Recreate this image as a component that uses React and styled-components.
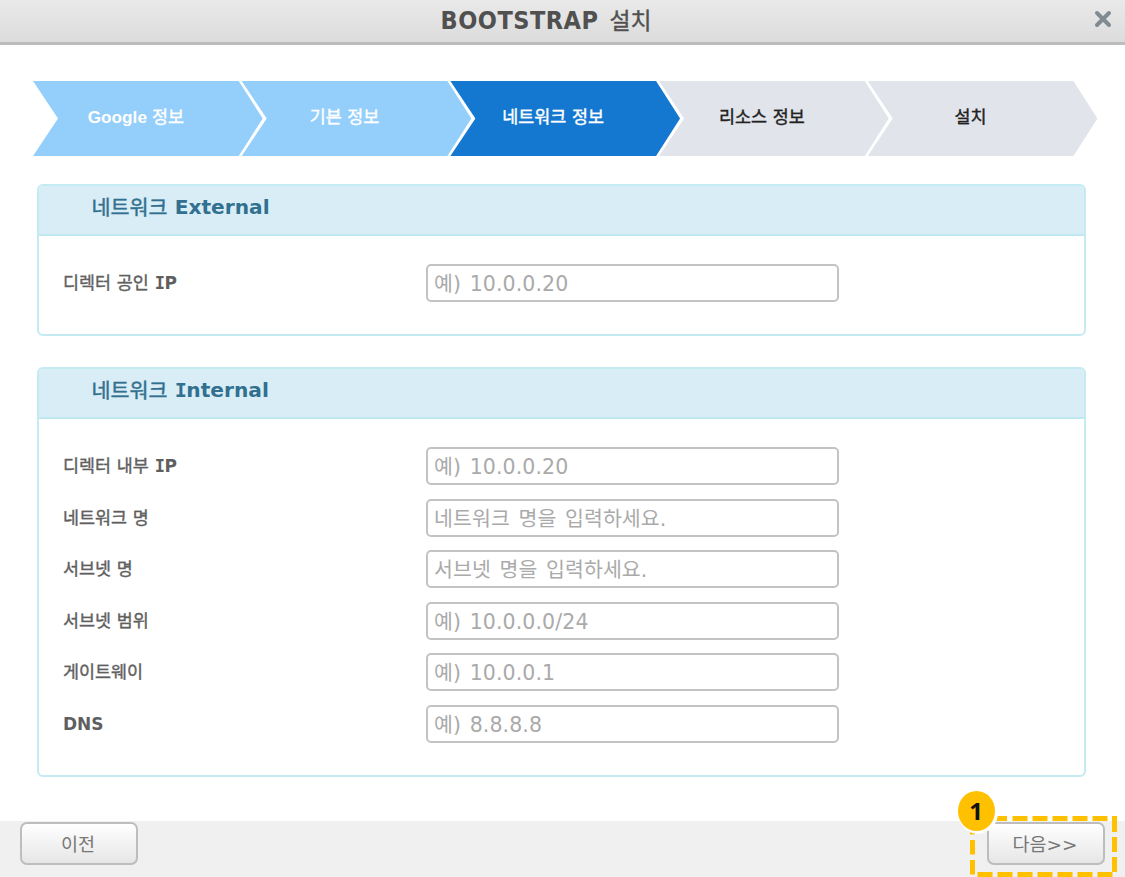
import React from "react";
import styled, { createGlobalStyle } from "styled-components";

const GlobalStyle = createGlobalStyle`
  * { box-sizing: border-box; }
  body { margin: 0; background: #fff; overflow: hidden; }
`;

const latin = `"DejaVu Sans", Verdana`;
const hangul = `"Noto Sans CJK KR", sans-serif`;

const Dialog = styled.div`
  width: 1125px;
  height: 877px;
  display: flex;
  flex-direction: column;
  background: #fff;
  font-family: ${latin}, ${hangul};
  color: #555;
`;

const TitleBar = styled.header`
  position: relative;
  flex: none;
  display: flex;
  justify-content: center;
  height: 45px;
  padding-right: 33px;
  background: linear-gradient(#e9e9e9, #dcdcdc);
  border-bottom: 3px solid #bcbcbc;
`;

const Title = styled.h1`
  display: flex;
  gap: 11px;
  margin: 0;
  line-height: 41px;
  font-size: 25px;
  font-weight: 700;
  color: #505050;
`;

const TitleLatin = styled.span`
  font-family: "DejaVu Sans Condensed", "DejaVu Sans", sans-serif;
  font-stretch: condensed;
  letter-spacing: 0.5px;
`;

const Ko = styled.span`
  margin-top: -1px;
  font-family: ${hangul};
  font-size: ${(p) => p.$size}px;
  font-weight: 400;
  word-spacing: 1.8px;
  -webkit-text-stroke: ${(p) => p.$stroke ?? 0.4}px currentColor;
`;

const SerifCap = styled.span`
  font-family: "DejaVu Sans Mono", monospace;
  letter-spacing: -0.5px;
`;

const Close = styled.button`
  position: absolute;
  top: 10px;
  right: 13px;
  display: flex;
  padding: 0;
  border: 0;
  background: none;
`;

const Steps = styled.ol`
  flex: none;
  display: flex;
  margin: 36px 0 0 33px;
  padding: 0;
  list-style: none;
`;

const tones = {
  done: { bg: "#94cefb", fg: "#fff" },
  active: { bg: "#1478d0", fg: "#fff" },
  todo: { bg: "#e1e4ea", fg: "#222" },
};

const Step = styled.li`
  flex: none;
  width: 229.7px;
  height: 75px;
  margin-right: -21px;
  padding-right: 24px;
  display: flex;
  justify-content: center;
  gap: 5px;
  line-height: 72px;
  font-family: "Liberation Sans", Arial, sans-serif;
  font-size: 17.2px;
  font-weight: 700;
  white-space: nowrap;
  color: ${(p) => tones[p.$tone].fg};
  background: ${(p) => tones[p.$tone].bg};
  clip-path: polygon(0 0, calc(100% - 24px) 0, 100% 50%, calc(100% - 24px) 100%, 0 100%, 25px 50%);
`;

const Panels = styled.main`
  flex: 1;
  display: flex;
  flex-direction: column;
  gap: 31px;
  padding: 28px 39px 0 37px;
`;

const Panel = styled.section`
  height: ${(p) => p.$height}px;
  border: 2px solid #c4ebf2;
  border-radius: 6px;
  overflow: hidden;
`;

const PanelHead = styled.h2`
  display: flex;
  gap: 7px;
  height: 50px;
  margin: 0;
  padding-left: 52.5px;
  line-height: 42px;
  font-size: 20.2px;
  font-weight: 700;
  color: #31708f;
  background: #d9edf7;
  border-bottom: 2px solid #c0e8f0;
`;

const Fields = styled.div`
  display: flex;
  flex-direction: column;
  gap: 13.6px;
  padding: 28px 0 0 24px;
`;

const Field = styled.label`
  display: grid;
  grid-template-columns: 363px 413px;
  height: 38px;
`;

const Label = styled.span`
  display: flex;
  gap: 6px;
  line-height: 38px;
  font-size: 17px;
  font-weight: 700;
  color: #5f5f5f;
`;

const Input = styled.input`
  width: 413px;
  height: 38px;
  padding: 2px 7px 0 6px;
  border: 2px solid #c3c3c3;
  border-radius: 5px;
  outline: 0;
  background: #fff;
  font: 20.5px ${latin}, ${hangul};
  letter-spacing: 0.1px;
  word-spacing: 2px;
  color: #555;
  &::placeholder { color: #aaa; opacity: 1; }
`;

const Footer = styled.footer`
  position: relative;
  flex: none;
  display: flex;
  justify-content: space-between;
  height: 56px;
  padding: 1px 20px 0;
  background: #f0f0f0;
`;

const Button = styled.button`
  width: 118px;
  height: 43px;
  padding: 0 2px 1px 0;
  border: 2px solid #bdbdbd;
  border-radius: 7px;
  background: linear-gradient(#fff, #e6e6e6);
  font: 18.5px ${latin}, ${hangul};
  color: #777;
`;

const Callout = styled.div`
  position: absolute;
  right: 0;
  bottom: 0;
  width: 175px;
  height: 92px;
  pointer-events: none;
  svg { display: block; }
`;

const Badge = styled.span`
  position: absolute;
  left: 8px;
  top: 6px;
  width: 37px;
  height: 40px;
  padding-right: 1px;
  border-radius: 50%;
  background: #ffc000;
  text-align: center;
  font: 700 24px/40px "Open Sans", "Noto Sans", sans-serif;
  color: #111;
`;

const dashes = [
  "M996 818.5H1007M1012.5 818.5h15M1032.5 818.5h15M1052.5 818.5h15M1072.5 818.5h15M1092.5 818.5h15",
  "M1112 818.5h2.5V832M1114.5 837v15M1114.5 857v15",
  "M1112.5 874.5h-15M1092.5 874.5h-15M1072.5 874.5h-15M1052.5 874.5h-15M1032.5 874.5h-15M1012.5 874.5h-15M992.5 874.5h-15",
  "M972.5 874.5v-14.500M972.5 854.500v-14.500M972.5 834.500v-3",
].join("");

const steps = [
  { latin: "Google", text: "정보", tone: "done" },
  { text: "기본 정보", tone: "done" },
  { text: "네트워크 정보", tone: "active" },
  { text: "리소스 정보", tone: "todo" },
  { text: "설치", tone: "todo" },
];

const panels = [
  {
    name: "External",
    height: 152,
    fields: [{ ko: "디렉터 공인", en: "IP", hint: "예) 10.0.0.20" }],
  },
  {
    name: "Internal",
    height: 410,
    fields: [
      { ko: "디렉터 내부", en: "IP", hint: "예) 10.0.0.20" },
      { ko: "네트워크 명", hint: "네트워크 명을 입력하세요." },
      { ko: "서브넷 명", hint: "서브넷 명을 입력하세요." },
      { ko: "서브넷 범위", hint: "예) 10.0.0.0/24" },
      { ko: "게이트웨이", hint: "예) 10.0.0.1" },
      { en: "DNS", hint: "예) 8.8.8.8" },
    ],
  },
];

// A leading capital I is set with its serifs.
function Latin({ children }) {
  return children.startsWith("I") ? (
    <span>
      <SerifCap>I</SerifCap>
      {children.slice(1)}
    </span>
  ) : (
    <span>{children}</span>
  );
}

export default function App() {
  return (
    <Dialog>
      <GlobalStyle />
      <TitleBar>
        <Title>
          <TitleLatin>BOOTSTRAP</TitleLatin>
          <Ko $size={22.8}>설치</Ko>
        </Title>
        <Close aria-label="닫기">
          <svg width="18" height="18" viewBox="0 0 18 18" fill="none" stroke="#818b92" strokeWidth="4">
            <path d="M3 3 15 15M15 3 3 15" strokeLinecap="round" />
          </svg>
        </Close>
      </TitleBar>

      <Steps>
        {steps.map((s) => (
          <Step key={s.text} $tone={s.tone}>
            {s.latin && <span>{s.latin}</span>}
            <Ko $size={17.4}>{s.text}</Ko>
          </Step>
        ))}
      </Steps>

      <Panels>
        {panels.map((p) => (
          <Panel key={p.name} $height={p.height}>
            <PanelHead>
              <Ko $size={20.7}>네트워크</Ko>
              <Latin>{p.name}</Latin>
            </PanelHead>
            <Fields>
              {p.fields.map((f) => (
                <Field key={f.ko || f.en}>
                  <Label>
                    {f.ko && <Ko $size={17.4}>{f.ko}</Ko>}
                    {f.en && <Latin>{f.en}</Latin>}
                  </Label>
                  <Input placeholder={f.hint} />
                </Field>
              ))}
            </Fields>
          </Panel>
        ))}
      </Panels>

      <Footer>
        <Button>이전</Button>
        <Button>다음&gt;&gt;</Button>
        <Callout>
          <svg width="175" height="92" viewBox="950 785 175 92">
            <path d={dashes} fill="none" stroke="#ffc000" strokeWidth="5" />
            <ellipse cx="978" cy="812.500" rx="20" ry="21.500" fill="#fff" />
          </svg>
          <Badge>1</Badge>
        </Callout>
      </Footer>
    </Dialog>
  );
}
